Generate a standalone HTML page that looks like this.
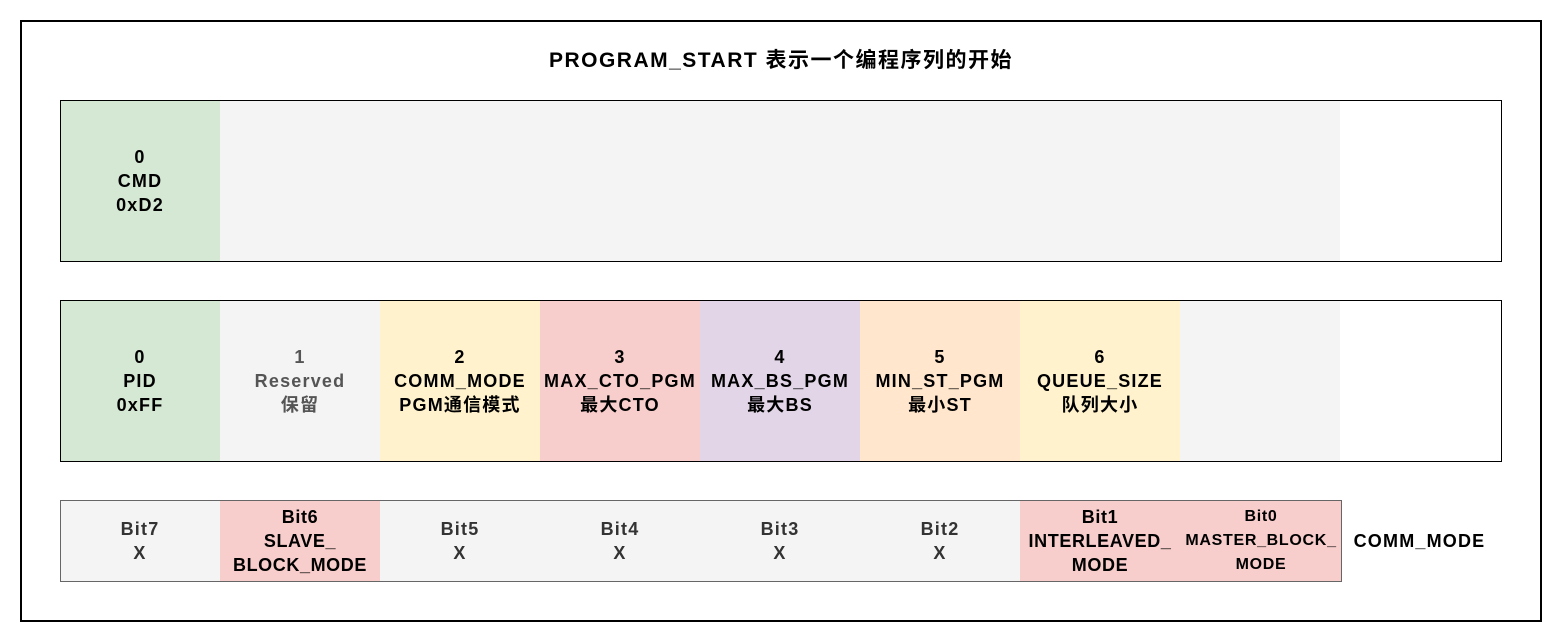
<!DOCTYPE html>
<html><head><meta charset="utf-8"><style>
body{margin:0;width:1564px;height:644px;background:#fff;position:relative;font-family:"Liberation Sans","Noto Sans CJK SC",sans-serif;font-weight:bold;overflow:hidden}
.a{position:absolute;box-sizing:border-box}
.c{position:absolute;display:flex;align-items:center;justify-content:center;text-align:center;font-size:18px;letter-spacing:1.2px;line-height:24px;color:#000;white-space:nowrap}
</style></head><body>
<div class="a" style="left:20px;top:20px;width:1522px;height:602px;border:2px solid #000"></div>
<div class="c" style="left:20px;top:46px;width:1522px;height:30px;font-size:21px;letter-spacing:1.5px">PROGRAM_START 表示一个编程序列的开始</div>

<div class="c" style="left:60px;top:100px;width:160px;height:162px;background:#d5e8d4">0<br>CMD<br>0xD2</div>
<div class="a" style="left:220px;top:100px;width:1120px;height:162px;background:#f4f4f4"></div>
<div class="a" style="left:60px;top:100px;width:1442px;height:162px;border:1px solid #000"></div>

<div class="c" style="left:60px;top:300px;width:160px;height:162px;background:#d5e8d4">0<br>PID<br>0xFF</div>
<div class="c" style="left:220px;top:300px;width:160px;height:162px;background:#f4f4f4;color:#555">1<br>Reserved<br>保留</div>
<div class="c" style="left:380px;top:300px;width:160px;height:162px;background:#fff2cc">2<br>COMM_MODE<br>PGM通信模式</div>
<div class="c" style="left:540px;top:300px;width:160px;height:162px;background:#f8cecc">3<br>MAX_CTO_PGM<br>最大CTO</div>
<div class="c" style="left:700px;top:300px;width:160px;height:162px;background:#e1d5e7">4<br>MAX_BS_PGM<br>最大BS</div>
<div class="c" style="left:860px;top:300px;width:160px;height:162px;background:#ffe6cc">5<br>MIN_ST_PGM<br>最小ST</div>
<div class="c" style="left:1020px;top:300px;width:160px;height:162px;background:#fff2cc">6<br>QUEUE_SIZE<br>队列大小</div>
<div class="a" style="left:1180px;top:300px;width:160px;height:162px;background:#f4f4f4"></div>
<div class="a" style="left:60px;top:300px;width:1442px;height:162px;border:1px solid #000"></div>

<div class="c" style="left:60px;top:500px;width:160px;height:82px;background:#f4f4f4;color:#333">Bit7<br>X</div>
<div class="c" style="left:220px;top:500px;width:160px;height:82px;background:#f8cecc;color:#000;letter-spacing:0.6px">Bit6<br>SLAVE_<br>BLOCK_MODE</div>
<div class="c" style="left:380px;top:500px;width:160px;height:82px;background:#f4f4f4;color:#333">Bit5<br>X</div>
<div class="c" style="left:540px;top:500px;width:160px;height:82px;background:#f4f4f4;color:#333">Bit4<br>X</div>
<div class="c" style="left:700px;top:500px;width:160px;height:82px;background:#f4f4f4;color:#333">Bit3<br>X</div>
<div class="c" style="left:860px;top:500px;width:160px;height:82px;background:#f4f4f4;color:#333">Bit2<br>X</div>
<div class="c" style="left:1020px;top:500px;width:160px;height:82px;background:#f8cecc;letter-spacing:0.6px">Bit1<br>INTERLEAVED_<br>MODE</div>
<div class="c" style="left:1180px;top:500px;width:162px;height:82px;background:#f8cecc;font-size:16px;letter-spacing:0.7px">Bit0<br>MASTER_BLOCK_<br>MODE</div>
<div class="a" style="left:60px;top:500px;width:1282px;height:82px;border:1px solid #666"></div>
<div class="c" style="left:1342px;top:500px;width:155px;height:82px">COMM_MODE</div>
</body></html>
